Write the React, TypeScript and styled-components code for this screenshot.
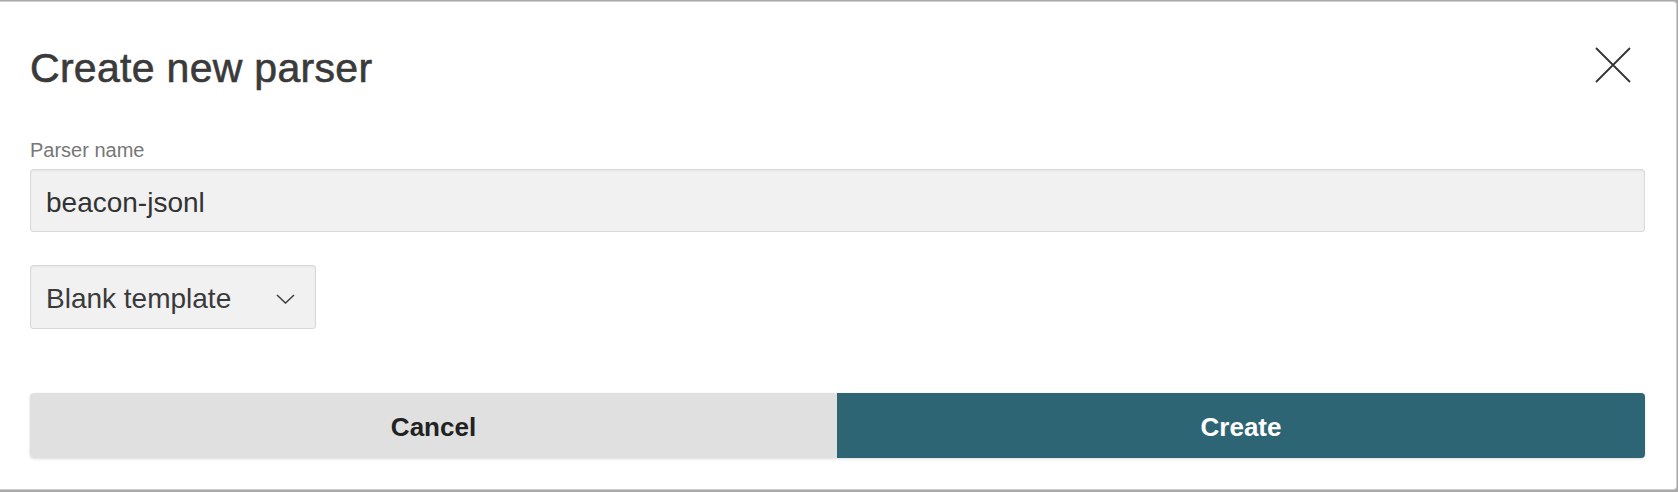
import { createGlobalStyle } from "styled-components"
import styled from "styled-components"

const GlobalStyle = createGlobalStyle`
  html, body {
    margin: 0;
    padding: 0;
    height: 100%;
  }
  body {
    font-family: "Liberation Sans", Arial, sans-serif;
    background: #a9a9a9;
    overflow: hidden;
  }
  * {
    box-sizing: border-box;
  }
`

const Backdrop = styled.div`
  min-height: 100vh;
  padding: 1px 1px 0 0;
  background: #a9a9a9;
`

const Dialog = styled.div`
  background: #fff;
  border: 1px solid #cfcfcf;
  border-left: none;
  border-radius: 0 4px 4px 0;
  padding: 42px 31px 31px 30px;
  display: flex;
  flex-direction: column;
`

const Header = styled.div`
  display: flex;
  align-items: flex-start;
  justify-content: space-between;
`

const Title = styled.h2`
  margin: 0;
  font-size: 41px;
  line-height: 49px;
  font-weight: 400;
  color: #3a3a3a;
  letter-spacing: 0.3px;
  -webkit-text-stroke: 0.6px #3a3a3a;
`

const CloseButton = styled.button`
  width: 36px;
  height: 36px;
  margin: 3px 14px 0 0;
  padding: 0;
  border: none;
  background: transparent;
  display: flex;
  cursor: pointer;
`

const Field = styled.div`
  margin-top: 45px;
  display: flex;
  flex-direction: column;
  gap: 7px;
`

const Label = styled.label`
  font-size: 20px;
  line-height: 24px;
  color: #777;
`

const TextInput = styled.input`
  height: 63px;
  width: 100%;
  padding: 4px 15px 0;
  font-family: inherit;
  font-size: 28px;
  color: #333;
  background: #f1f1f1;
  border: 1px solid #dadada;
  border-radius: 3px;
  box-shadow: inset 0 1px 2px rgba(0, 0, 0, 0.06);
  outline: none;
`

const Select = styled.div`
  margin-top: 33px;
  width: 286px;
  height: 64px;
  padding: 4px 20px 0 15px;
  display: flex;
  align-items: center;
  justify-content: space-between;
  font-size: 28px;
  color: #3a3a3a;
  background: #f1f1f1;
  border: 1px solid #d8d8d8;
  border-radius: 3px;
  box-shadow: inset 0 1px 2px rgba(0, 0, 0, 0.05);
  cursor: pointer;
`

const Footer = styled.div`
  margin-top: 64px;
  display: grid;
  grid-template-columns: 807px 1fr;
  border-radius: 4px;
  box-shadow: 0 1px 3px rgba(0, 0, 0, 0.14);
`

const ActionButton = styled.button<{ $primary?: boolean }>`
  height: 65px;
  padding: 3px 0 0;
  border: none;
  font-family: inherit;
  font-size: 26px;
  font-weight: 700;
  cursor: pointer;
  background: ${p => (p.$primary ? "#2d6575" : "#e0e0e0")};
  color: ${p => (p.$primary ? "#fff" : "#222")};
  border-radius: ${p => (p.$primary ? "0 4px 4px 0" : "4px 0 0 4px")};
`

export default function App() {
  return (
    <>
      <GlobalStyle />
      <Backdrop>
        <Dialog>
          <Header>
            <Title>Create new parser</Title>
            <CloseButton aria-label="Close">
              <svg width="36" height="36" viewBox="0 0 36 36">
                <path d="M1 1L35 35M35 1L1 35" stroke="#333" strokeWidth="1.8" fill="none" />
              </svg>
            </CloseButton>
          </Header>

          <Field>
            <Label>Parser name</Label>
            <TextInput defaultValue="beacon-jsonl" />
          </Field>

          <Select>
            <span>Blank template</span>
            <svg width="19" height="10" viewBox="0 0 19 10">
              <polyline points="1,1 9.5,9 18,1" stroke="#444" strokeWidth="1.6" fill="none" />
            </svg>
          </Select>

          <Footer>
            <ActionButton>Cancel</ActionButton>
            <ActionButton $primary>Create</ActionButton>
          </Footer>
        </Dialog>
      </Backdrop>
    </>
  )
}
